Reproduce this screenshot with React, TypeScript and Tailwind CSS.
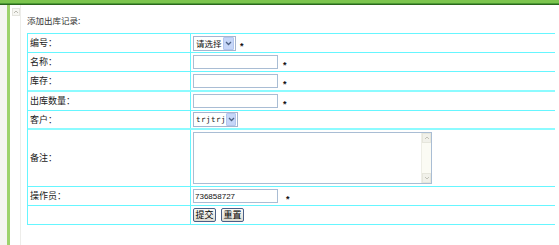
import React from 'react';

const cjk = "font-['Noto_Sans_CJK_SC','Noto_Sans',sans-serif]";

// little XP style select, drawn so the arrow button matches
const FakeSelect: React.FC<{ value: string; width: string; mono?: boolean }> = ({ value, width, mono }) => (
  <div className={`flex items-center h-[15px] ${width} border border-[#a5b5cf] bg-white`}>
    <span
      className={`flex-1 pl-[2px] leading-[13px] text-[#111] ${
        mono ? "font-['DejaVu_Sans_Mono',monospace] text-[7.5px] tracking-[0.5px]" : 'text-[8.5px]'
      }`}
    >
      {value}
    </span>
    <div className="w-[11px] h-[13px] mr-px flex items-center justify-center bg-[#c6d6f8] border border-[#b4c6ee] rounded-[1px]">
      <svg width="7" height="5" viewBox="0 0 7 5">
        <path d="M1 1 L3.5 3.5 L6 1" fill="none" stroke="#4d6185" strokeWidth="1.3" />
      </svg>
    </div>
  </div>
);

const Star: React.FC<{ ml: string }> = ({ ml }) => (
  <span className={`${ml} pt-[5px] text-[9px] leading-[8px] font-bold text-[#111] font-['Liberation_Sans',sans-serif]`}>*</span>
);

const TextBox: React.FC<{ value?: string }> = ({ value }) => (
  <input
    readOnly
    value={value ?? ''}
    className="w-[85px] h-[14px] border border-[#a9bdd4] bg-white px-px text-[8px] leading-[12px] text-[#111] font-['Liberation_Sans',sans-serif] outline-none"
  />
);

const Btn: React.FC<{ label: string }> = ({ label }) => (
  <button className="w-[23px] h-[14px] border border-[#4a5f86] rounded-[2px] bg-gradient-to-b from-[#fbfbf8] to-[#dedcd2] text-[9px] leading-[12px] text-black">
    {label}
  </button>
);

const Row: React.FC<{
  label: string;
  h: string;
  thick?: boolean;
  children?: React.ReactNode;
}> = ({ label, h, thick, children }) => (
  <div
    className={`flex ${h} ${thick ? 'border-b-2 border-[#8cfbff]' : 'border-b border-[#66f6ff]'}`}
  >
    <div className="w-[163px] border-r border-[#66f6ff] flex items-center pl-[2px] text-[9px] text-[#1a1a1a]">
      {label}
    </div>
    <div className="flex-1 flex items-center pl-[2px]">{children}</div>
  </div>
);

export default function App() {
  return (
    <div className={`w-[559px] h-[245px] bg-white overflow-hidden ${cjk}`}>
      {/* top green band */}
      <div className="h-[3px] bg-[#7cc54e]" />
      <div className="h-px bg-[#4b9a33]" />
      <div className="h-px bg-[#2c661d]" />

      <div className="flex h-[240px]">
        <div className="w-[7px] bg-[#f5f6f1]" />
        <div className="w-[3px] bg-[#9dd36c]" />
        {/* stub of a scrollbar */}
        <div className="w-[10px] pt-[3px] pl-[2px]">
          <div className="w-[8px] h-[8px] border border-[#e4e4de] bg-[#f6f6f2] flex items-center justify-center">
            <svg width="6" height="4" viewBox="0 0 6 4">
              <path d="M1 3 L3 1 L5 3" fill="none" stroke="#b9b9b0" strokeWidth="1" />
            </svg>
          </div>
        </div>
        <div className="w-px bg-[#ededea]" />
        <div className="w-[6px]" />

        <div className="flex-1">
          <div className="h-[28px] pt-[10px] text-[8.5px] leading-[10px] text-[#333]">添加出库记录:</div>

          <div className="w-[528px] border-t border-l border-[#66f6ff]">
            <Row label="编号：" h="h-[19px]">
              <FakeSelect value="请选择" width="w-[43px]" />
              <Star ml="ml-[4px]" />
            </Row>
            <Row label="名称：" h="h-[19px]">
              <TextBox />
              <Star ml="ml-[5px]" />
            </Row>
            <Row label="库存：" h="h-[20px]" thick>
              <TextBox />
              <Star ml="ml-[5px]" />
            </Row>
            <Row label="出库数量：" h="h-[19px]">
              <TextBox />
              <Star ml="ml-[5px]" />
            </Row>
            <Row label="客户：" h="h-[19px]" thick>
              <FakeSelect value="trjtrj" width="w-[45px]" mono />
            </Row>
            <Row label="备注：" h="h-[57px]">
              <div className="flex w-[239px] h-[52px] border border-[#a9bdd4] bg-white">
                <div className="flex-1" />
                <div className="w-[10px] flex flex-col bg-[#fbfbf4] border-l border-[#eeeee6]">
                  <div className="h-[10px] flex items-center justify-center bg-[#f1f1ea] border border-[#e6e6dc]">
                    <svg width="6" height="4" viewBox="0 0 6 4">
                      <path d="M1 3 L3 1 L5 3" fill="none" stroke="#c2c2b8" strokeWidth="1" />
                    </svg>
                  </div>
                  <div className="flex-1" />
                  <div className="h-[10px] flex items-center justify-center bg-[#f1f1ea] border border-[#e6e6dc]">
                    <svg width="6" height="4" viewBox="0 0 6 4">
                      <path d="M1 1 L3 3 L5 1" fill="none" stroke="#c2c2b8" strokeWidth="1" />
                    </svg>
                  </div>
                </div>
              </div>
            </Row>
            <Row label="操作员：" h="h-[19px]">
              <TextBox value="736858727" />
              <Star ml="ml-[8px]" />
            </Row>
            <Row label="" h="h-[19px]">
              <div className="flex gap-[5px]">
                <Btn label="提交" />
                <Btn label="重置" />
              </div>
            </Row>
          </div>
        </div>
      </div>
    </div>
  );
}
